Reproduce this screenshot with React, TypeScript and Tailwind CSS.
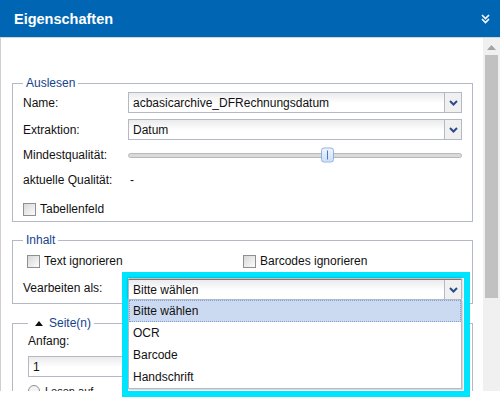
import React from "react"

const Chevron = () => (
  <svg width="9" height="6" viewBox="0 0 9 6">
    <polyline points="1,1 4.5,4.5 8,1" fill="none" stroke="#2d4c8c" strokeWidth="2" />
  </svg>
)

const Select = ({ value, className = "" }: { value: string; className?: string }) => (
  <div
    className={`flex h-[21px] border border-[#b5b8c8] bg-[linear-gradient(to_bottom,#ebebeb,#ffffff_55%)] ${className}`}
  >
    <div className="flex flex-1 items-center pl-[4px] whitespace-nowrap overflow-hidden">{value}</div>
    <div className="flex w-[17px] items-center justify-center border-l border-[#b5b8c8] bg-[#f0f0f0]">
      <Chevron />
    </div>
  </div>
)

const Checkbox = () => (
  <span className="inline-block h-[13px] w-[13px] shrink-0 border border-[#8e8f8f] bg-[linear-gradient(135deg,#d8d8d8,#fbfbfb)]" />
)

const Row = ({ label, children, className = "" }: { label: string; children?: React.ReactNode; className?: string }) => (
  <div className={`flex items-center ${className}`}>
    <span className="w-[105px] shrink-0 whitespace-nowrap">{label}</span>
    {children}
  </div>
)

const options = ["Bitte wählen", "OCR", "Barcode", "Handschrift"]

export default function App() {
  return (
    <div className="relative h-[397px] w-[500px] overflow-hidden bg-white font-['Liberation_Sans',Arial,sans-serif] text-[12px] leading-[14px] text-[#111]">
      {/* header */}
      <div className="flex h-[38px] items-center justify-between border-b border-[#d4d4d4] bg-[#0066b3] pl-[14px] pr-[10px]">
        <span className="text-[14.5px] font-bold text-white">Eigenschaften</span>
        <svg width="9" height="10" viewBox="0 0 9 10">
          <polyline points="1,1 4.5,4.5 8,1" fill="none" stroke="#fff" strokeWidth="1.6" />
          <polyline points="1,5 4.5,8.5 8,5" fill="none" stroke="#fff" strokeWidth="1.6" />
        </svg>
      </div>

      <div className="flex h-[353px] border-l border-[#cfcfcf]">
        <div className="flex-1 overflow-hidden pl-[11px] pr-[10px] pt-[38px]">
          {/* Auslesen */}
          <fieldset className="border border-[#b5b8c8] px-[10px]">
            <legend className="px-[3px] text-[#15428b]">Auslesen</legend>
            <Row label="Name:" className="mt-[2px] h-[21px]">
              <Select value="acbasicarchive_DFRechnungsdatum" className="flex-1" />
            </Row>
            <Row label="Extraktion:" className="mt-[6px] h-[21px]">
              <Select value="Datum" className="flex-1" />
            </Row>
            <Row label="Mindestqualität:" className="mt-[3px] h-[24px]">
              <div className="relative h-[5px] flex-1 rounded-full border border-[#b9b9b9] bg-[#dadada]">
                <div className="absolute left-[192px] top-1/2 flex h-[15px] w-[13px] -translate-y-1/2 justify-center rounded-[3px] border border-[#8eb1e3] bg-[linear-gradient(#eef4fd,#cddff8)]">
                  <span className="mt-[2px] h-[9px] w-px bg-[#4f79bd]" />
                </div>
              </div>
            </Row>
            <Row label="aktuelle Qualität:" className="mt-px h-[24px]">
              <span className="pl-[2px]">-</span>
            </Row>
            <div className="mt-[5px] flex h-[24px] items-center gap-[4px]">
              <Checkbox />
              <span>Tabellenfeld</span>
            </div>
          </fieldset>

          {/* Inhalt */}
          <fieldset className="mt-[11px] border border-[#b5b8c8] px-[10px] pb-[5px]">
            <legend className="px-[3px] text-[#15428b]">Inhalt</legend>
            <div className="mt-[3px] flex h-[22px] items-center pl-[4px]">
              <div className="flex w-[216px] items-center gap-[4px]">
                <Checkbox />
                <span>Text ignorieren</span>
              </div>
              <div className="flex items-center gap-[4px]">
                <Checkbox />
                <span>Barcodes ignorieren</span>
              </div>
            </div>
            <Row label="Vearbeiten als:" className="mt-[5px] h-[21px]">
              <Select value="" className="flex-1" />
            </Row>
          </fieldset>

          {/* Seite(n) */}
          <fieldset className="mt-[12px] border border-[#b5b8c8] pl-[15px] pr-[10px]">
            <legend className="flex items-center px-[3px] text-[#15428b]">
              <svg width="8" height="5" viewBox="0 0 8 5" className="ml-[4px] mr-[6px]">
                <polygon points="0,5 4,0 8,5" fill="#111" />
              </svg>
              Seite(n)
            </legend>
            <div className="mt-[2px] flex h-[18px] items-center">Anfang:</div>
            <div className="mt-[6px] flex h-[21px] items-center border border-[#b5b8c8] bg-[linear-gradient(to_bottom,#ebebeb,#ffffff_55%)] pl-[4px]">
              1
            </div>
            <div className="mt-[7px] flex h-[14px] items-center gap-[5px]">
              <span className="h-[12px] w-[12px] rounded-full border border-[#8e8f8f] bg-[#f4f4f4]" />
              <span className="text-[11px]">Lesen auf</span>
            </div>
          </fieldset>
        </div>

        {/* scrollbar */}
        <div className="flex w-[17px] flex-col items-center bg-[#f0f0f0]">
          <svg width="9" height="5" viewBox="0 0 9 5" className="mt-[7px]">
            <polygon points="0,5 4.5,0 9,5" fill="#a3a3a3" />
          </svg>
          <div className="mt-[5px] h-[243px] w-[13px] bg-[#c1c1c1]" />
        </div>
      </div>

      {/* highlighted open dropdown */}
      <div className="absolute left-[122px] top-[272px] h-[125px] w-[348px] border-[6px] border-[#00e5ff] bg-white">
        <div className="w-[334px] pt-px">
          <Select value="Bitte wählen" className="border-t-[#7a7a7a] shadow-[0_-1px_2px_rgba(0,0,0,0.35)]" />
          <div className="border border-t-0 border-[#b5b8c8] bg-white shadow-[1px_1px_1px_rgba(0,0,0,0.15)]">
            {options.map((o, i) => (
              <div
                key={o}
                className={`flex h-[22px] items-center border pl-[3px] ${
                  i === 0 ? "border-dotted border-[#7da2ce] bg-[#cbdaf0]" : "border-transparent"
                }`}
              >
                {o}
              </div>
            ))}
          </div>
        </div>
      </div>
    </div>
  )
}
